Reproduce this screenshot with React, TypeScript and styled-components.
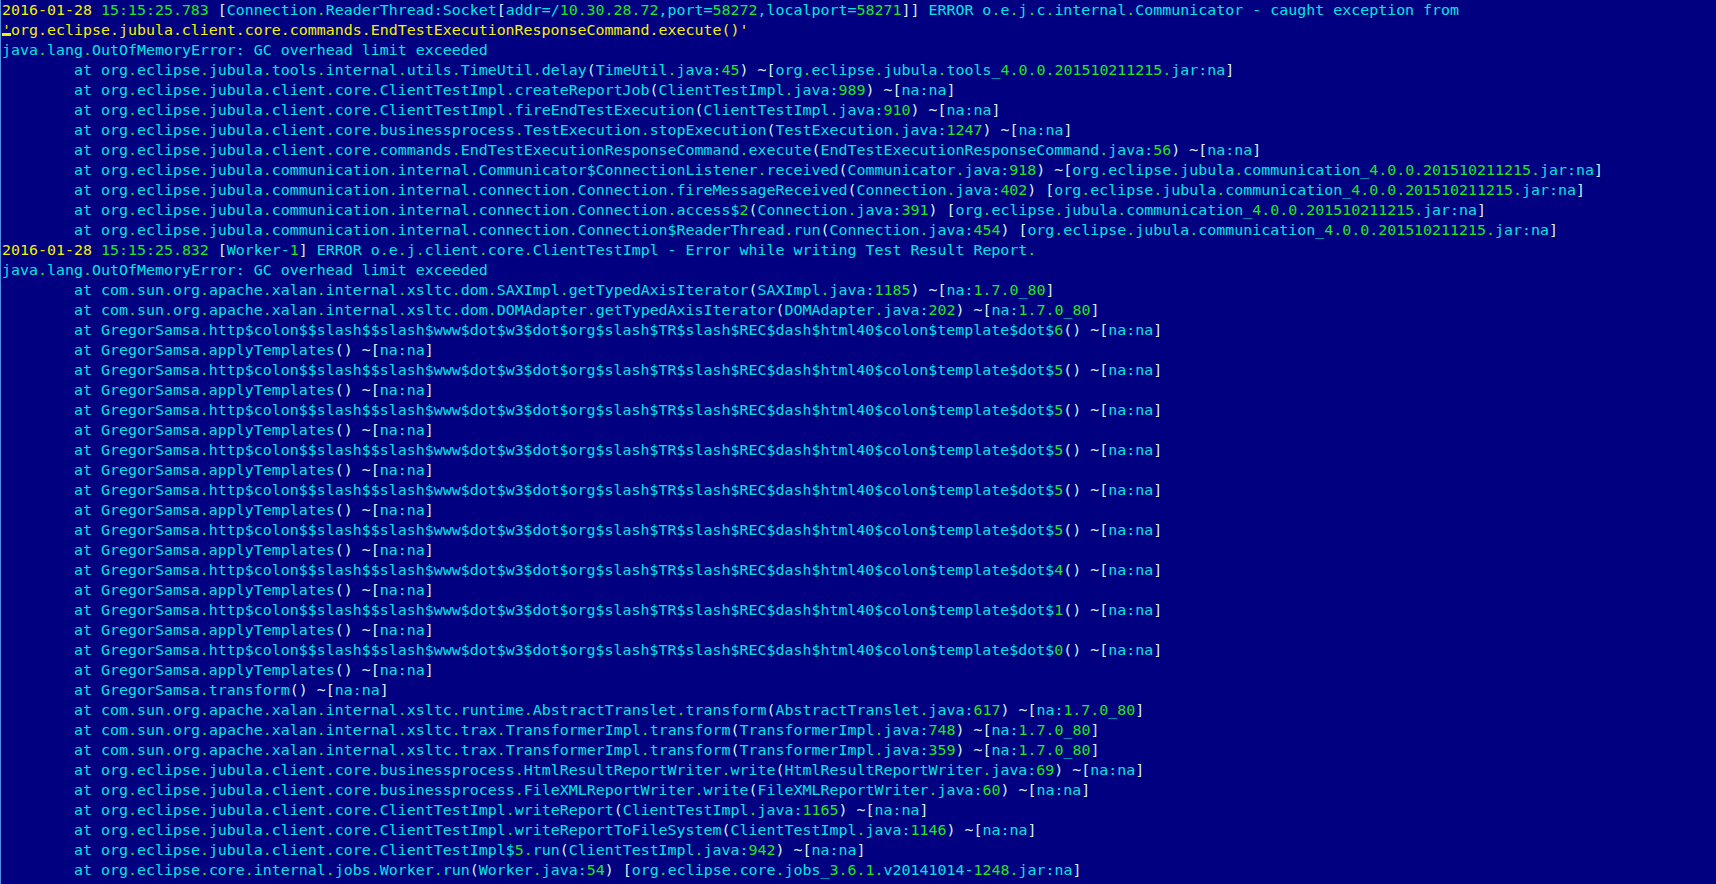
import React from "react";
import styled, { createGlobalStyle } from "styled-components";

type Kind = "text" | "num" | "date" | "str" | "punct";

const palette: Record<Kind, string> = {
  text: "#00e6e6",
  num: "#1ee81e",
  date: "#f2f200",
  str: "#f2f200",
  punct: "#d4f2f2",
};

const GREGOR =
  "\tat GregorSamsa.http$colon$$slash$$slash$www$dot$w3$dot$org$slash$TR$slash$REC$dash$html40$colon$template$dot$";
const APPLY = "\tat GregorSamsa.applyTemplates() ~[na:na]";
const COMM_JAR = "[org.eclipse.jubula.communication_4.0.0.201510211215.jar:na]";

const lines: string[] = [
  "2016-01-28 15:15:25.783 [Connection.ReaderThread:Socket[addr=/10.30.28.72,port=58272,localport=58271]] ERROR o.e.j.c.internal.Communicator - caught exception from",
  "'org.eclipse.jubula.client.core.commands.EndTestExecutionResponseCommand.execute()'",
  "java.lang.OutOfMemoryError: GC overhead limit exceeded",
  "\tat org.eclipse.jubula.tools.internal.utils.TimeUtil.delay(TimeUtil.java:45) ~[org.eclipse.jubula.tools_4.0.0.201510211215.jar:na]",
  "\tat org.eclipse.jubula.client.core.ClientTestImpl.createReportJob(ClientTestImpl.java:989) ~[na:na]",
  "\tat org.eclipse.jubula.client.core.ClientTestImpl.fireEndTestExecution(ClientTestImpl.java:910) ~[na:na]",
  "\tat org.eclipse.jubula.client.core.businessprocess.TestExecution.stopExecution(TestExecution.java:1247) ~[na:na]",
  "\tat org.eclipse.jubula.client.core.commands.EndTestExecutionResponseCommand.execute(EndTestExecutionResponseCommand.java:56) ~[na:na]",
  "\tat org.eclipse.jubula.communication.internal.Communicator$ConnectionListener.received(Communicator.java:918) ~" + COMM_JAR,
  "\tat org.eclipse.jubula.communication.internal.connection.Connection.fireMessageReceived(Connection.java:402) " + COMM_JAR,
  "\tat org.eclipse.jubula.communication.internal.connection.Connection.access$2(Connection.java:391) " + COMM_JAR,
  "\tat org.eclipse.jubula.communication.internal.connection.Connection$ReaderThread.run(Connection.java:454) " + COMM_JAR,
  "2016-01-28 15:15:25.832 [Worker-1] ERROR o.e.j.client.core.ClientTestImpl - Error while writing Test Result Report.",
  "java.lang.OutOfMemoryError: GC overhead limit exceeded",
  "\tat com.sun.org.apache.xalan.internal.xsltc.dom.SAXImpl.getTypedAxisIterator(SAXImpl.java:1185) ~[na:1.7.0_80]",
  "\tat com.sun.org.apache.xalan.internal.xsltc.dom.DOMAdapter.getTypedAxisIterator(DOMAdapter.java:202) ~[na:1.7.0_80]",
  GREGOR + "6() ~[na:na]",
  APPLY,
  GREGOR + "5() ~[na:na]",
  APPLY,
  GREGOR + "5() ~[na:na]",
  APPLY,
  GREGOR + "5() ~[na:na]",
  APPLY,
  GREGOR + "5() ~[na:na]",
  APPLY,
  GREGOR + "5() ~[na:na]",
  APPLY,
  GREGOR + "4() ~[na:na]",
  APPLY,
  GREGOR + "1() ~[na:na]",
  APPLY,
  GREGOR + "0() ~[na:na]",
  APPLY,
  "\tat GregorSamsa.transform() ~[na:na]",
  "\tat com.sun.org.apache.xalan.internal.xsltc.runtime.AbstractTranslet.transform(AbstractTranslet.java:617) ~[na:1.7.0_80]",
  "\tat com.sun.org.apache.xalan.internal.xsltc.trax.TransformerImpl.transform(TransformerImpl.java:748) ~[na:1.7.0_80]",
  "\tat com.sun.org.apache.xalan.internal.xsltc.trax.TransformerImpl.transform(TransformerImpl.java:359) ~[na:1.7.0_80]",
  "\tat org.eclipse.jubula.client.core.businessprocess.HtmlResultReportWriter.write(HtmlResultReportWriter.java:69) ~[na:na]",
  "\tat org.eclipse.jubula.client.core.businessprocess.FileXMLReportWriter.write(FileXMLReportWriter.java:60) ~[na:na]",
  "\tat org.eclipse.jubula.client.core.ClientTestImpl.writeReport(ClientTestImpl.java:1165) ~[na:na]",
  "\tat org.eclipse.jubula.client.core.ClientTestImpl.writeReportToFileSystem(ClientTestImpl.java:1146) ~[na:na]",
  "\tat org.eclipse.jubula.client.core.ClientTestImpl$5.run(ClientTestImpl.java:942) ~[na:na]",
  "\tat org.eclipse.core.internal.jobs.Worker.run(Worker.java:54) [org.eclipse.core.jobs_3.6.1.v20141014-1248.jar:na]",
  "\tat org.eclipse.jubula.client.core.ClientTestImpl.executeTestSuite(ClientTestImpl.java:1034) [org.eclipse.jubula.client.core_4.0.0.201510211215.jar:na]",
];

// rough log highlighter: date / time / quoted / words / numbers / dots / brackets
const tokenRe =
  /(\d{4}-\d{2}-\d{2}(?= ))|(\d{2}:\d{2}:\d{2}\.\d+)|('[^']*'?)|([A-Za-z][A-Za-z0-9]*)|(\d+)|(\.)|([()[\]~])|([\s\S])/g;

const tokenize = (line: string): [Kind, string][] => {
  const out: [Kind, string][] = [];
  const push = (kind: Kind, s: string) => {
    const last = out[out.length - 1];
    if (last && last[0] === kind) last[1] += s;
    else out.push([kind, s]);
  };
  let m: RegExpExecArray | null;
  tokenRe.lastIndex = 0;
  while ((m = tokenRe.exec(line))) {
    if (m[1]) push("date", m[1]);
    else if (m[2]) push("num", m[2]);
    else if (m[3]) push("str", m[3]);
    else if (m[4]) push("text", m[4]);
    else if (m[5]) push("num", m[5]);
    else if (m[6]) push("num", m[6]);
    else if (m[7]) push("punct", m[7]);
    else push("text", m[8]);
  }
  return out;
};

const GlobalStyle = createGlobalStyle`
  html, body {
    margin: 0;
    padding: 0;
    background: #000080;
  }
  body {
    overflow: hidden;
  }
`;

const Console = styled.div`
  width: 1716px;
  height: 884px;
  box-sizing: border-box;
  background: #000080;
  border-left: 1px solid #4f8fe6;
  padding-left: 1px;
  overflow: hidden;
  font-family: "DejaVu Sans Mono", "Liberation Mono", monospace;
  font-size: 14.95px;
  line-height: 20px;
  color: ${palette.text};
`;

const Line = styled.div`
  height: 20px;
  white-space: pre;
  tab-size: 8;
`;

const Tok = styled.span<{ $kind: Kind }>`
  color: ${(p) => palette[p.$kind]};
`;

const Cursor = styled.span`
  position: relative;
  color: ${palette.str};

  &::after {
    content: "";
    position: absolute;
    left: 0;
    right: 0;
    bottom: 3px;
    height: 3px;
    background: ${palette.str};
  }
`;

const LogLine = ({ text, cursor }: { text: string; cursor?: boolean }) => {
  const toks = tokenize(text);
  return (
    <Line>
      {toks.map(([kind, s], i) => {
        if (cursor && i === 0) {
          return (
            <React.Fragment key={i}>
              <Cursor>{s[0]}</Cursor>
              <Tok $kind={kind}>{s.slice(1)}</Tok>
            </React.Fragment>
          );
        }
        return (
          <Tok key={i} $kind={kind}>
            {s}
          </Tok>
        );
      })}
    </Line>
  );
};

const App = () => {
  return (
    <>
      <GlobalStyle />
      <Console>
        {lines.map((l, i) => (
          <LogLine key={i} text={l} cursor={i === 1} />
        ))}
      </Console>
    </>
  );
};

export default App;
